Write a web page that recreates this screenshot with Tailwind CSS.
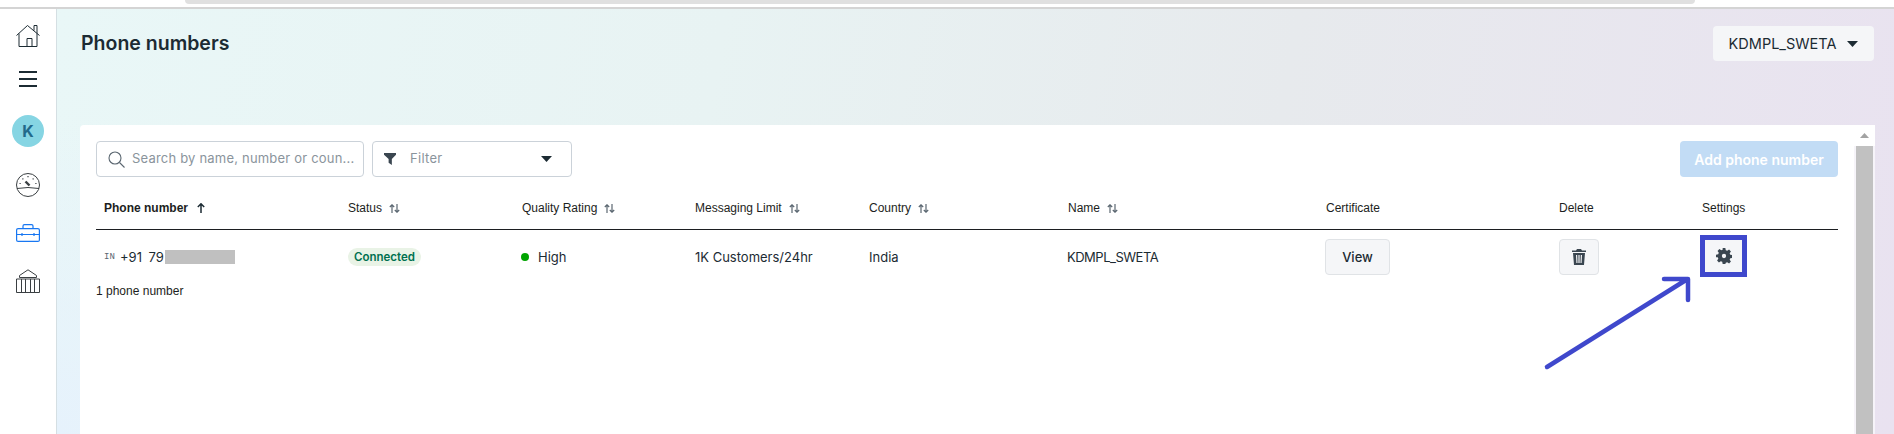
<!DOCTYPE html>
<html lang="en">
<head>
  <meta charset="UTF-8">
  <title>Phone numbers</title>
  <script src="https://cdn.jsdelivr.net/npm/@tailwindcss/browser@4"></script>
</head>
<body class="w-[1894px] h-[434px] overflow-hidden bg-white font-['Inter',sans-serif] text-[#1c2b33]">
  <!-- browser strip -->
  <div class="relative h-[9px] bg-white border-b-2 border-[#d4d4d4]">
    <div class="absolute left-[185px] top-0 w-[1510px] h-[4px] bg-[#e0e0e0] rounded-b-[8px]"></div>
  </div>

  <div class="flex h-[425px]">
    <!-- sidebar -->
    <aside class="w-[57px] shrink-0 bg-white border-r border-[#d5dfe3] flex flex-col items-center pt-[15px]">
      <svg class="w-[24px] h-[24px]" viewBox="0 0 24 24" fill="none" stroke="#1c2b33" stroke-width="1"><path d="M.5 11.500 11.500 1.500 23.500 11.500M3 9.500v13h18v-13M18 6.500V1.500h3v8M11 22.500v-8h5v8"/></svg>
      <svg class="w-[18px] h-[16px] mt-[23px]" viewBox="0 0 18 16" fill="none" stroke="#1c2b33" stroke-width="2"><path d="M0 1h18M0 8h18M0 15h18"/></svg>
      <div class="mt-[28px] w-[32px] h-[32px] rounded-full bg-[#86d5e3] flex items-center justify-center text-[#22698a] text-[16px] font-bold">K</div>
      <svg class="w-[24px] h-[24px] mt-[26px]" viewBox="0 0 24 24" fill="none" stroke="#3a3f42" stroke-width="1"><circle cx="12" cy="12" r="11.500"/><path d="M1 15.500Q12 13.500 23 15.500"/><path d="M9.500 8.500l4 4" stroke-width="2.400"/><path d="M12 3v1.200M6.500 5.500l.8.8M3.500 10.500h1.200M19.300 10.500h1.200M17.500 5.500l-.8.8" stroke-width="1.200"/></svg>
      <svg class="w-[24px] h-[18px] mt-[27px]" viewBox="0 0 24 18" fill="none" stroke="#1877f2" stroke-width="1.200"><rect x=".6" y="4.600" width="22.800" height="12.800" rx="1.500"/><path d="M7 4.500V2a1.400 1.400 0 0 1 1.400-1.400h7.200A1.400 1.400 0 0 1 17 2v2.500M.6 10.500h22.800M6 9v3M18 9v3"/></svg>
      <svg class="w-[24px] h-[24px] mt-[27px]" viewBox="0 0 24 24" fill="none" stroke="#3a3f42" stroke-width="1"><path d="M3.500 6.500 12 .8 20.500 6.500v2h-17zM.5 10h23v13.500H.5zM5.500 10v13.500M9.500 10v13.500M14.500 10v13.500M18.500 10v13.500"/></svg>
    </aside>

    <!-- main -->
    <main class="relative flex-1 pl-[23px] pr-[19px] bg-[radial-gradient(circle_at_0%_100%,#e6f2fc_0,transparent_320px),linear-gradient(100deg,#e9f7f7_0%,#e8f3f3_35%,#e7eaed_65%,#e9e2f0_100%)]">
      <header class="h-[116px] flex items-start justify-between pr-[1px]">
        <h1 class="mt-[21px] ml-[1px] text-[19.5px] leading-[26px] font-semibold">Phone numbers</h1>
        <button class="mt-[17px] w-[161px] h-[35px] rounded-[4px] bg-[#f5f6f8] flex items-center justify-center gap-[11px] text-[14.500px]">
          KDMPL_SWETA
          <svg class="w-[11px] h-[6px]" viewBox="0 0 11 6"><path d="M0 0h11L5.500 6z" fill="#1c2b33"/></svg>
        </button>
      </header>

      <div class="flex h-[309px] w-[1795px]">
        <section class="w-[1774px] bg-white rounded-tl-[4px] pl-[16px] pr-[16px] pt-[16px]">
          <div class="flex items-center h-[36px]">
            <div class="w-[268px] h-full rounded-[4px] border border-[#cbd2d9] flex items-center pl-[11px] gap-[7px]">
              <svg class="w-[17px] h-[17px] shrink-0" viewBox="0 0 17 17" fill="none" stroke="#5a6670" stroke-width="1.100"><circle cx="7" cy="7" r="6"/><path d="M11.500 11.500l5 5"/></svg>
              <span class="text-[13px] text-[#8a949c] whitespace-nowrap tracking-[.2px]">Search by name, number or coun...</span>
            </div>
            <div class="ml-[8px] w-[200px] h-full rounded-[4px] border border-[#cbd2d9] flex items-center pl-[11px] pr-[19px]">
              <svg class="w-[12px] h-[12px]" viewBox="0 0 13 13"><path d="M0 0h13v2L8.500 6.500V13L5 10.500v-4L0 2z" fill="#3a4650"/></svg>
              <span class="ml-[14px] text-[13px] text-[#8a949c] tracking-[.3px]">Filter</span>
              <svg class="ml-auto w-[11px] h-[6px]" viewBox="0 0 11 6"><path d="M0 0h11L5.500 6z" fill="#1c2b33"/></svg>
            </div>
            <button class="ml-auto w-[158px] h-full rounded-[4px] bg-[#c2dcf5] text-white text-[14px] font-semibold">Add phone number</button>
          </div>

          <div class="mt-[16px] h-[37px] border-b border-[#1c1e21] grid grid-cols-[252px_174px_173px_173px_200px_258px_233px_143px_1fr] items-start pt-[8px] font-['Liberation_Sans',sans-serif] text-[12px] leading-[14px] text-[#1c1e21]">
            <div class="pl-[8px] font-bold flex items-center gap-[9px]">Phone number
              <svg class="w-[8px] h-[10px]" viewBox="0 0 8 10" fill="none" stroke="#1c2b33" stroke-width="1.500"><path d="M4 10V1M.8 4 4 .8 7.200 4"/></svg>
            </div>
            <div class="flex items-center gap-[7px]">Status
              <svg class="w-[11px] h-[9px]" viewBox="0 0 11 9" fill="none" stroke="#5a6670" stroke-width="1.200"><path d="M3 9V1M.8 3 3 .8 5.200 3M8 0v8M5.800 6 8 8.200 10.200 6"/></svg>
            </div>
            <div class="flex items-center gap-[7px]">Quality Rating
              <svg class="w-[11px] h-[9px]" viewBox="0 0 11 9" fill="none" stroke="#5a6670" stroke-width="1.200"><path d="M3 9V1M.8 3 3 .8 5.200 3M8 0v8M5.800 6 8 8.200 10.200 6"/></svg>
            </div>
            <div class="flex items-center gap-[7px]">Messaging Limit
              <svg class="w-[11px] h-[9px]" viewBox="0 0 11 9" fill="none" stroke="#5a6670" stroke-width="1.200"><path d="M3 9V1M.8 3 3 .8 5.200 3M8 0v8M5.800 6 8 8.200 10.200 6"/></svg>
            </div>
            <div class="flex items-center gap-[7px] pl-[1px]">Country
              <svg class="w-[11px] h-[9px]" viewBox="0 0 11 9" fill="none" stroke="#5a6670" stroke-width="1.200"><path d="M3 9V1M.8 3 3 .8 5.200 3M8 0v8M5.800 6 8 8.200 10.200 6"/></svg>
            </div>
            <div class="flex items-center gap-[7px]">Name
              <svg class="w-[11px] h-[9px]" viewBox="0 0 11 9" fill="none" stroke="#5a6670" stroke-width="1.200"><path d="M3 9V1M.8 3 3 .8 5.200 3M8 0v8M5.800 6 8 8.200 10.200 6"/></svg>
            </div>
            <div>Certificate</div>
            <div>Delete</div>
            <div>Settings</div>
          </div>

          <div class="h-[54px] grid grid-cols-[252px_174px_173px_173px_200px_258px_233px_143px_1fr] items-center text-[13px] leading-[16px]">
            <div class="pl-[8px] flex items-center">
              <span class="font-['Liberation_Mono',monospace] text-[9px] text-[#5a6670] w-[16px]">IN</span>
              <span class="w-[45px] [word-spacing:3px] whitespace-nowrap -mt-[1px]">+91 79</span>
              <span class="w-[70px] h-[14px] bg-[#c0c0c0]"></span>
            </div>
            <div><span class="inline-block h-[18px] leading-[18px] px-[6px] rounded-full bg-[#e9f3e6] text-[#00704f] text-[11.500px] font-semibold">Connected</span></div>
            <div class="flex items-center -ml-[1px]"><span class="w-[8px] h-[8px] rounded-full bg-[#00a400]"></span><span class="ml-[9px]">High</span></div>
            <div>1K Customers/24hr</div>
            <div class="pl-[1px]">India</div>
            <div class="-ml-[1px] tracking-[-.5px]">KDMPL_SWETA</div>
            <div class="-ml-[1px]"><button class="w-[65px] h-[36px] rounded-[4px] border border-[#e0e3e6] bg-[#f5f6f8] font-medium">View</button></div>
            <div><button class="w-[40px] h-[36px] rounded-[4px] border border-[#e0e3e6] bg-[#f5f6f8] flex items-center justify-center">
              <svg class="w-[14px] h-[16px]" viewBox="0 0 14 16" fill="#3a4650"><path d="M5 0h4l1 1.500h4V3H0V1.500h4zM1 4h12l-1 12H2zM4 6l.4 8h1.100L5.200 6zM6.400 6v8h1.200V6zM8.800 6l-.3 8h1.100l.4-8z" fill-rule="evenodd"/></svg>
            </button></div>
            <div class="-ml-[2px] -mt-[2px]"><div class="w-[47px] h-[42px] border-[5px] border-[#3f48cc] bg-[#f5f6f8] flex items-center justify-center">
              <svg class="w-[16px] h-[16px]" viewBox="0 0 24 24" fill="#3a4650"><path fill-rule="evenodd" d="M10 0h4l.7 3.300 2.100.9L19.600 2.300l2.800 2.800-1.900 2.800.9 2.100 3.300.7v4l-3.300.7-.9 2.100 1.900 2.800-2.800 2.800-2.800-1.900-2.100.9L14 24h-4l-.7-3.300-2.100-.9-2.800 1.900-2.800-2.800 1.900-2.800-.9-2.100L0 14v-4l3.300-.7.9-2.100L2.300 4.400l2.800-2.800 2.800 1.900 2.100-.9zM12 8.800a3.200 3.200 0 1 0 0 6.400 3.200 3.200 0 0 0 0-6.400z"/></svg>
            </div></div>
          </div>

          <p class="font-['Liberation_Sans',sans-serif] text-[12px] leading-[14px] text-[#1c1e21]">1 phone number</p>
        </section>

        <!-- scrollbar -->
        <div class="w-[21px] bg-white/60 flex flex-col items-center">
          <div class="w-full h-[21px] flex items-center justify-center bg-white">
            <svg class="w-[9px] h-[5px]" viewBox="0 0 9 5"><path d="M4.500 0 9 5H0z" fill="#a3a3a3"/></svg>
          </div>
          <div class="w-[17px] flex-1 bg-[#c1c1c1]"></div>
        </div>
      </div>
    </main>
  </div>

  <!-- annotation arrow -->
  <svg class="absolute left-0 top-0 w-[1894px] h-[434px] pointer-events-none" viewBox="0 0 1894 434" fill="none" stroke="#3f48cc" stroke-width="4.500" stroke-linecap="round" stroke-linejoin="round">
    <path d="M1547 367 1686 280M1664 279h24v21"/>
  </svg>
</body>
</html>
